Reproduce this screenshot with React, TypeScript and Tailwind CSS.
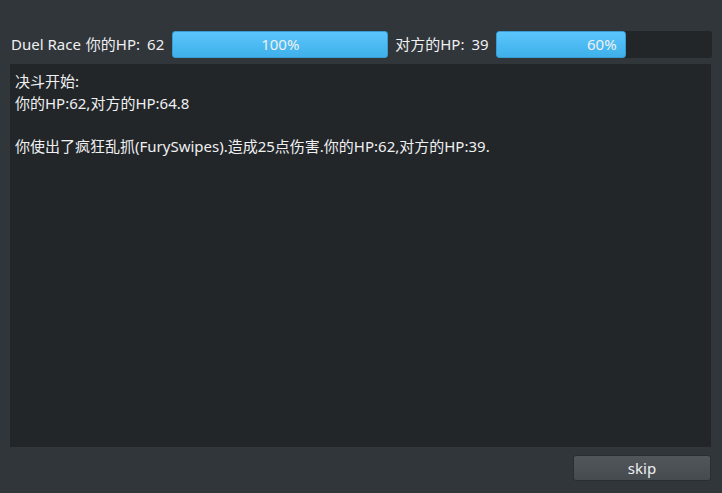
export default function App() {
  return (
    <main
      className="flex h-[493px] w-[722px] flex-col bg-[#31363b] px-[10px] pt-[30px] text-[15px] text-[#eff0f1]"
      style={{ fontFamily: '"Noto Sans", "Noto Sans CJK SC", sans-serif' }}
    >
      <div className="flex h-[28px] items-center">
        <span className="ml-[1px]">Duel Race</span>
        <span className="ml-[5px]">你的HP:</span>
        <span className="ml-[7px]">62</span>
        <div className="ml-[8px] flex h-[27px] w-[216px] items-center justify-center rounded-[3px] border border-[#3a9bd0] bg-gradient-to-b from-[#5ac5fb] to-[#3eb0ea]">
          100%
        </div>
        <span className="ml-[7px]">对方的HP:</span>
        <span className="ml-[7px]">39</span>
        <div className="ml-[7px] flex h-[27px] flex-1 rounded-[3px] bg-[#232629]">
          <div className="flex h-full w-[130px] items-center justify-end rounded-[3px] border border-[#3a9bd0] bg-gradient-to-b from-[#5ac5fb] to-[#3eb0ea] pr-[8px]">
            60%
          </div>
        </div>
      </div>
      <div className="mt-[6px] h-[383px] w-[701px] bg-[#232629] px-[5px] pt-[7px] leading-[21.5px]">
        <div>决斗开始:</div>
        <div>你的HP:62,对方的HP:64.8</div>
        <div>&nbsp;</div>
        <div>你使出了疯狂乱抓(FurySwipes).造成25点伤害.你的HP:62,对方的HP:39.</div>
      </div>
      <div className="mt-[8px] flex justify-end pr-[1px]">
        <button className="h-[26px] w-[138px] rounded-[3px] border border-[#2a2e32] bg-gradient-to-b from-[#51565b] to-[#464b50] text-[15px] text-[#eff0f1]">
          skip
        </button>
      </div>
    </main>
  );
}
